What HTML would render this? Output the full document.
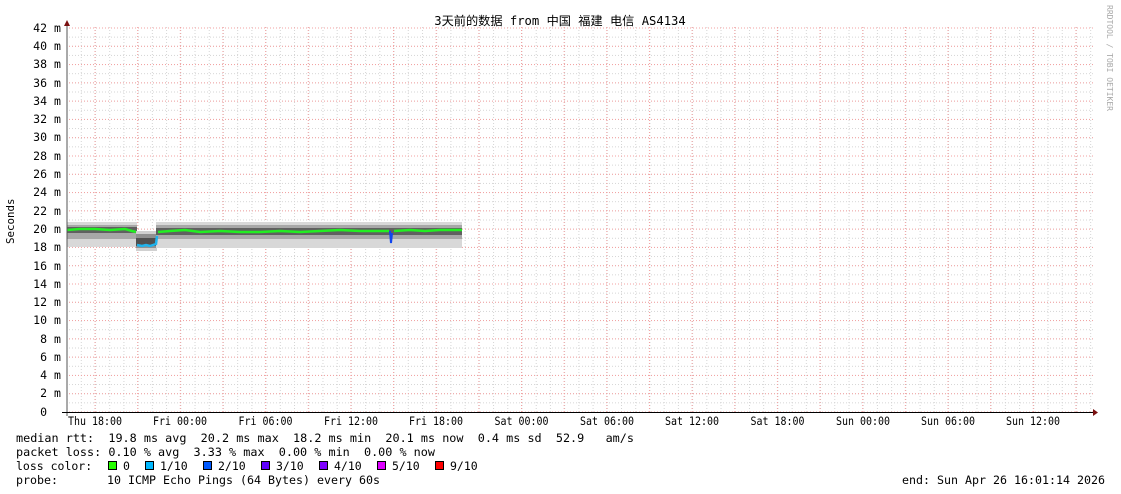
<!DOCTYPE html>
<html><head><meta charset="utf-8"><style>
html,body{margin:0;padding:0;background:#fff;}
svg{display:block;}
text{font-family:"DejaVu Sans Mono","Liberation Mono",monospace;font-size:11.5px;fill:#000;}
</style></head><body>
<svg width="1121" height="494" viewBox="0 0 1121 494" xmlns="http://www.w3.org/2000/svg">
<defs>
<pattern id="vg" patternUnits="userSpaceOnUse" x="66.56" y="0" width="14.217" height="494"><line x1="0.5" y1="0" x2="0.5" y2="494" stroke="#d4d4d4" stroke-width="1" stroke-dasharray="1,2"/></pattern>
<pattern id="vr" patternUnits="userSpaceOnUse" x="94.5" y="0" width="42.65" height="494"><line x1="0.5" y1="0" x2="0.5" y2="494" stroke="#f3a0a0" stroke-width="1" stroke-dasharray="1,2"/></pattern>
<pattern id="hg" patternUnits="userSpaceOnUse" x="0" y="27.5" width="1121" height="9.143"><line x1="0" y1="0.5" x2="1121" y2="0.5" stroke="#d4d4d4" stroke-width="1" stroke-dasharray="1,2"/></pattern>
<pattern id="hr" patternUnits="userSpaceOnUse" x="0" y="27.5" width="1121" height="18.286"><line x1="0" y1="0.5" x2="1121" y2="0.5" stroke="#f3a0a0" stroke-width="1" stroke-dasharray="1,2"/></pattern>
</defs>
<rect x="67" y="27" width="1027" height="386" fill="url(#vg)"/>
<rect x="67" y="27" width="1027" height="386" fill="url(#hg)"/>
<rect x="67" y="27" width="1027" height="386" fill="url(#vr)"/>
<rect x="67" y="27" width="1027" height="386" fill="url(#hr)"/>

<text x="560" y="25" text-anchor="middle" style="font-family:'DejaVu Sans Mono','Noto Sans CJK SC',monospace;font-size:12.2px">3天前的数据 from 中国 福建 电信 AS4134</text>
<text transform="translate(1107,5) rotate(90)" style="font-size:8px;fill:#aaa">RRDTOOL / TOBI OETIKER</text>
<text transform="translate(14,244) rotate(-90)" style="font-size:10.8px">Seconds</text>

<g>
<rect x="67" y="222" width="70" height="25" fill="#d8d8d8"/>
<rect x="67" y="225" width="70" height="14" fill="#a8a8a8"/>
<rect x="67" y="227" width="70" height="6" fill="#606060"/>
<rect x="136" y="231" width="21" height="20" fill="#d0d0d0"/>
<rect x="136" y="234" width="21" height="14" fill="#909090"/>
<rect x="136" y="238" width="21" height="8" fill="#505050"/>
<rect x="156" y="222" width="306" height="26" fill="#d8d8d8"/>
<rect x="156" y="225" width="306" height="14" fill="#a8a8a8"/>
<rect x="156" y="228" width="306" height="7" fill="#606060"/>
</g>
<polyline fill="none" stroke="#22ee22" stroke-width="2.5" points="67,230 80,229 95,229 110,230 125,229 132,231 136,232"/>
<polyline fill="none" stroke="#1fb4ee" stroke-width="2.5" points="137,245 142,246 146,245 150,246 156,244 157,236"/>
<polyline fill="none" stroke="#22ee22" stroke-width="2.5" points="158,232 170,231 185,230 200,232 220,231 240,232 260,232 280,231 300,232 320,231 340,230 360,231 380,231 389,231"/>
<polyline fill="none" stroke="#1144ee" stroke-width="2" points="390,231 391,243 392,233"/>
<polyline fill="none" stroke="#22ee22" stroke-width="2.5" points="394,231 410,230 425,231 440,230 462,230"/>

<line x1="67" y1="24" x2="67" y2="416" stroke="#555" stroke-width="1"/>
<line x1="62" y1="412.5" x2="1095" y2="412.5" stroke="#000" stroke-width="1"/>
<polygon points="64,26 70,26 67,20" fill="#7a1010"/>
<polygon points="1093,409 1093,416 1098,412.5" fill="#7a1010"/>

<g text-anchor="end" style="font-size:10.5px">
<text x="47" y="32">42</text><text x="47" y="50">40</text><text x="47" y="68">38</text><text x="47" y="87">36</text><text x="47" y="105">34</text><text x="47" y="123">32</text><text x="47" y="141">30</text><text x="47" y="160">28</text><text x="47" y="178">26</text><text x="47" y="196">24</text><text x="47" y="215">22</text><text x="47" y="233">20</text><text x="47" y="251">18</text><text x="47" y="270">16</text><text x="47" y="288">14</text><text x="47" y="306">12</text><text x="47" y="324">10</text><text x="47" y="343">8</text><text x="47" y="361">6</text><text x="47" y="379">4</text><text x="47" y="397">2</text><text x="47" y="416">0</text>
</g>
<g style="font-size:9px">
<text x="54" y="32">m</text><text x="54" y="50">m</text><text x="54" y="68">m</text><text x="54" y="87">m</text><text x="54" y="105">m</text><text x="54" y="123">m</text><text x="54" y="141">m</text><text x="54" y="160">m</text><text x="54" y="178">m</text><text x="54" y="196">m</text><text x="54" y="215">m</text><text x="54" y="233">m</text><text x="54" y="251">m</text><text x="54" y="270">m</text><text x="54" y="288">m</text><text x="54" y="306">m</text><text x="54" y="324">m</text><text x="54" y="343">m</text><text x="54" y="361">m</text><text x="54" y="379">m</text><text x="54" y="397">m</text>
</g>

<g style="font-size:10px">
<text x="68" y="425" textLength="54" lengthAdjust="spacingAndGlyphs">Thu 18:00</text>
<text x="153" y="425" textLength="54" lengthAdjust="spacingAndGlyphs">Fri 00:00</text>
<text x="238.5" y="425" textLength="54" lengthAdjust="spacingAndGlyphs">Fri 06:00</text>
<text x="324" y="425" textLength="54" lengthAdjust="spacingAndGlyphs">Fri 12:00</text>
<text x="409" y="425" textLength="54" lengthAdjust="spacingAndGlyphs">Fri 18:00</text>
<text x="494.5" y="425" textLength="54" lengthAdjust="spacingAndGlyphs">Sat 00:00</text>
<text x="580" y="425" textLength="54" lengthAdjust="spacingAndGlyphs">Sat 06:00</text>
<text x="665" y="425" textLength="54" lengthAdjust="spacingAndGlyphs">Sat 12:00</text>
<text x="750.5" y="425" textLength="54" lengthAdjust="spacingAndGlyphs">Sat 18:00</text>
<text x="836" y="425" textLength="54" lengthAdjust="spacingAndGlyphs">Sun 00:00</text>
<text x="921" y="425" textLength="54" lengthAdjust="spacingAndGlyphs">Sun 06:00</text>
<text x="1006" y="425" textLength="54" lengthAdjust="spacingAndGlyphs">Sun 12:00</text>
</g>

<text x="16" y="442" xml:space="preserve" textLength="618" lengthAdjust="spacingAndGlyphs">median rtt:  19.8 ms avg  20.2 ms max  18.2 ms min  20.1 ms now  0.4 ms sd  52.9   am/s</text>
<text x="16" y="456" xml:space="preserve" textLength="419" lengthAdjust="spacingAndGlyphs">packet loss: 0.10 % avg  3.33 % max  0.00 % min  0.00 % now</text>
<text x="16" y="470" xml:space="preserve">loss color:</text>
<g stroke="#000" stroke-width="1">
<rect x="108.5" y="461.5" width="8" height="8" fill="#26ff00"/>
<rect x="145.5" y="461.5" width="8" height="8" fill="#00b8ff"/>
<rect x="203.5" y="461.5" width="8" height="8" fill="#0059ff"/>
<rect x="261.5" y="461.5" width="8" height="8" fill="#5e00ff"/>
<rect x="319.5" y="461.5" width="8" height="8" fill="#7e00ff"/>
<rect x="377.5" y="461.5" width="8" height="8" fill="#dd00ff"/>
<rect x="435.5" y="461.5" width="8" height="8" fill="#ff0000"/>
</g>
<text x="123" y="470">0</text><text x="160" y="470">1/10</text><text x="218" y="470">2/10</text><text x="276" y="470">3/10</text><text x="334" y="470">4/10</text><text x="392" y="470">5/10</text><text x="450" y="470">9/10</text>
<text x="16" y="484" xml:space="preserve" textLength="364" lengthAdjust="spacingAndGlyphs">probe:       10 ICMP Echo Pings (64 Bytes) every 60s</text>
<text x="902" y="484" textLength="203" lengthAdjust="spacingAndGlyphs">end: Sun Apr 26 16:01:14 2026</text>
</svg>
</body></html>
